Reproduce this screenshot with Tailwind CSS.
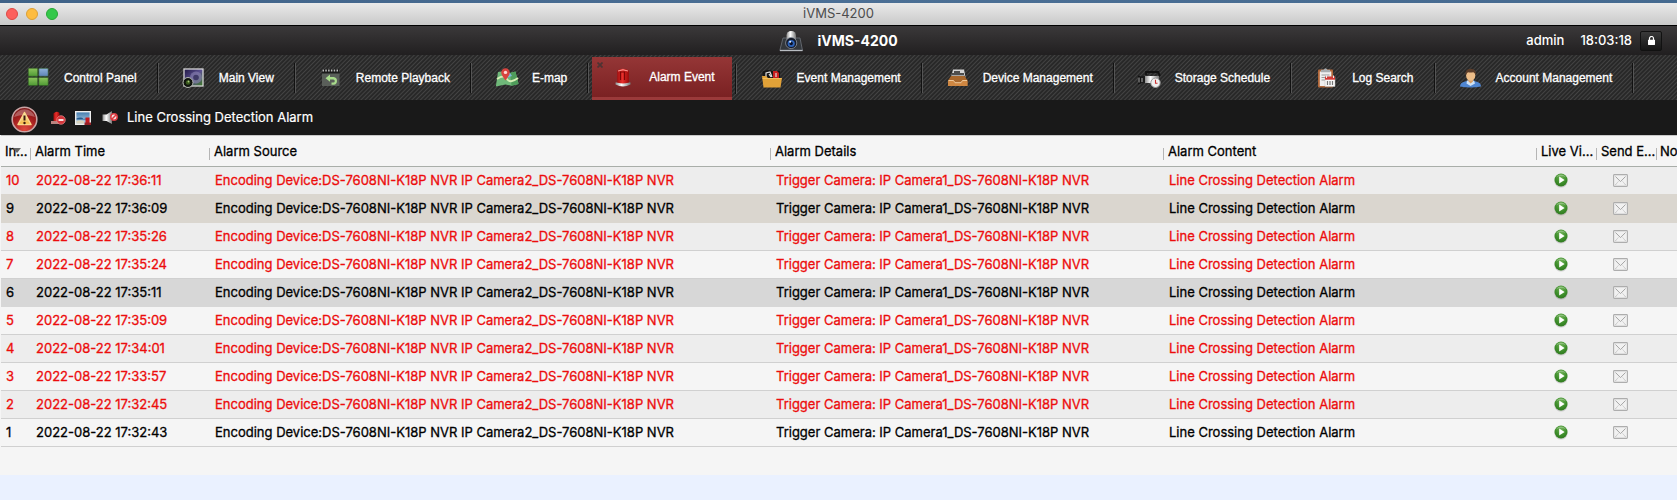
<!DOCTYPE html>
<html lang="en">
<head>
<meta charset="utf-8">
<title>iVMS-4200</title>
<script src="https://cdn.jsdelivr.net/npm/@tailwindcss/browser@4"></script>
</head>
<body class="min-h-screen bg-[#eaf1ff] font-['Inter',sans-serif] text-[13px] text-black overflow-x-hidden">

<svg class="absolute size-0" aria-hidden="true">
  <defs>
    <linearGradient id="gGreen" x1="0" y1="0" x2="0" y2="1"><stop offset="0" stop-color="#8cc45c"/><stop offset="1" stop-color="#4f9a35"/></linearGradient>
    <linearGradient id="gBlue" x1="0" y1="0" x2="0" y2="1"><stop offset="0" stop-color="#8fb2da"/><stop offset="1" stop-color="#5d83b5"/></linearGradient>
    <linearGradient id="gRed" x1="0" y1="0" x2="1" y2="0"><stop offset="0" stop-color="#a30f0f"/><stop offset=".45" stop-color="#e8302c"/><stop offset="1" stop-color="#9c0808"/></linearGradient>
    <linearGradient id="gSilver" x1="0" y1="0" x2="1" y2="0"><stop offset="0" stop-color="#8d8d8d"/><stop offset=".4" stop-color="#ffffff"/><stop offset="1" stop-color="#777"/></linearGradient>
    <linearGradient id="gView" x1="0" y1="0" x2="1" y2="1"><stop offset="0" stop-color="#1d1540"/><stop offset=".5" stop-color="#5b5090"/><stop offset="1" stop-color="#3c7a25"/></linearGradient>
    <linearGradient id="gSky" x1="0" y1="0" x2="0" y2="1"><stop offset="0" stop-color="#3f79ad"/><stop offset="1" stop-color="#c3dcee"/></linearGradient>
    <radialGradient id="gBadge" cx=".5" cy=".9" r=".9"><stop offset="0" stop-color="#e04a3e"/><stop offset=".6" stop-color="#a11d1d"/><stop offset="1" stop-color="#7a1a1a"/></radialGradient>
    <linearGradient id="gWarn" x1="0" y1="0" x2="0" y2="1"><stop offset="0" stop-color="#fff3c4"/><stop offset="1" stop-color="#f5b53c"/></linearGradient>
    <radialGradient id="gPlay" cx=".5" cy=".3" r=".7"><stop offset="0" stop-color="#6fb255"/><stop offset=".6" stop-color="#3f8f2c"/><stop offset="1" stop-color="#2f7a1f"/></radialGradient>
    <symbol id="play" viewBox="0 0 14 15"><ellipse cx="7" cy="8" rx="6.600" ry="6.600" fill="#000" opacity=".15"/><circle cx="7" cy="7" r="6.500" fill="url(#gPlay)"/><path d="M2 4.500A5.600 5.600 0 0 1 12 4.500Q7 1.600 2 4.500" fill="#fff" opacity=".3"/><path d="M5.200 3.400 10.600 7 5.200 10.600Z" fill="#fff"/></symbol>
    <symbol id="mail" viewBox="0 0 15 13"><rect x=".6" y=".6" width="13.800" height="11.800" rx=".8" fill="#f1f1f1" stroke="#adadad" stroke-width="1.100"/><path d="M2.500 2.500 7.500 7.600 12.500 2.500" fill="none" stroke="#a6a6a6"/><path d="M2.500 10.800 5.600 7.200M12.500 10.800 9.400 7.200" stroke="#b4b4b4" stroke-dasharray="1 .6"/></symbol>
  </defs>
</svg>

<div class="h-[3px] bg-linear-to-r from-[#3f6288] via-[#4b6f95] to-[#456a90]"></div>

<header>
  <div class="grid h-[23px] grid-cols-[1fr_auto_1fr] items-center border-b border-black bg-linear-to-b from-[#eaeaea] to-[#c9c9c9] px-1.5">
    <div class="flex gap-2">
      <button aria-label="Close" class="size-3 rounded-full border border-[#dd4a45] bg-[#fc605c]"></button>
      <button aria-label="Minimize" class="size-3 rounded-full border border-[#dda035] bg-[#fdbc40]"></button>
      <button aria-label="Zoom" class="size-3 rounded-full border border-[#28a836] bg-[#34c84a]"></button>
    </div>
    <div class="text-[#4c4c4c]">iVMS-4200</div>
  </div>

  <div class="grid h-[29px] grid-cols-[1fr_auto_1fr] items-center bg-linear-to-b from-[#3b393a] to-[#211f20] text-white">
    <div></div>
    <div class="flex items-center gap-3.5">
      <svg class="h-[22px] w-6" viewBox="0 0 24 22"><path d="M4 8h17l2.500 12.500H.8Z" fill="#33373c" stroke="#70757c" stroke-width=".8"/><path d="M1 20.500h22.500" stroke="#b9bdc2" stroke-width="1.300"/><rect x="7.500" y="1" width="9.500" height="13" rx="4.500" fill="url(#gSilver)"/><circle cx="12.200" cy="13" r="5.600" fill="#141a28" stroke="#8b929d" stroke-width=".8"/><circle cx="12.200" cy="13.500" r="3.600" fill="#2d62b8"/><circle cx="12.200" cy="13.500" r="1.700" fill="#081028"/><circle cx="11.200" cy="11.800" r="1" fill="#e4f0ff"/></svg>
      <h1 class="text-sm font-bold">iVMS-4200</h1>
    </div>
    <div class="flex items-center justify-end pr-[15px] font-medium">
      <span>admin</span>
      <span class="ml-4">18:03:18</span>
      <button aria-label="Lock" class="ml-2 flex h-5 w-[22px] items-center justify-center rounded-xs border border-[#111] bg-linear-to-b from-[#3a3a3a] to-[#161616]"><svg class="h-[9px] w-[7px]" viewBox="0 0 7 9"><rect y="3.700" width="7" height="5.300" rx=".4" fill="#fff"/><path d="M1.500 4V2.500a2 2 0 0 1 4 0V4" fill="none" stroke="#fff" stroke-width="1.200"/></svg></button>
    </div>
  </div>

  <nav class="flex h-[45px] items-center overflow-hidden bg-[#303030] bg-[repeating-linear-gradient(135deg,#282828_0px,#282828_1px,#434343_2px,#282828_3px)] font-['Liberation_Sans',Arial,sans-serif] text-xs text-white [-webkit-text-stroke:0.3px]">
    <button class="flex h-[30px] shrink-0 items-center gap-[11px] border-r border-[#555] pr-[21px] pl-[25px] shadow-[inset_-1px_0_#111]">
      <svg class="h-6 w-7" viewBox="0 0 28 24"><g stroke="#2f5b24" stroke-width=".6"><rect x="3.300" y="2.300" width="9.400" height="8" rx=".8" fill="url(#gGreen)"/><rect x="13.800" y="2.300" width="9.400" height="8" rx=".8" fill="url(#gBlue)"/><rect x="3.300" y="11.500" width="9.400" height="8" rx=".8" fill="url(#gGreen)"/><rect x="13.800" y="11.500" width="9.400" height="8" rx=".8" fill="url(#gGreen)"/></g></svg>
      Control Panel</button>
    <button class="flex h-[30px] shrink-0 items-center gap-[11px] border-r border-[#555] pr-[21px] pl-[21px] shadow-[inset_-1px_0_#111]">
      <svg class="h-6 w-7" viewBox="0 0 28 24"><rect x="4" y="3" width="19" height="17" fill="url(#gView)" stroke="#d6d6d6" stroke-width="1.300"/><circle cx="16" cy="11.500" r="6" fill="#8a83b0" opacity=".6"/><circle cx="16" cy="11.500" r="2.800" fill="#3f3a67"/><circle cx="8" cy="16.500" r="5" fill="#10140e" stroke="#b5b9b2"/><circle cx="8" cy="16.500" r="2.300" fill="#39591c"/><circle cx="8.500" cy="15.500" r=".9" fill="#a9c97c"/></svg>
      Main View</button>
    <button class="flex h-[30px] shrink-0 items-center gap-[11px] border-r border-[#555] pr-[21px] pl-[21px] shadow-[inset_-1px_0_#111]">
      <svg class="h-6 w-7" viewBox="0 0 28 24"><rect x="5" y="7" width="17.500" height="13" fill="#5a5f5a"/><rect x="5" y="3" width="17.500" height="4.500" fill="#1b1b1b"/><path d="M5.500 4.500h17" stroke="#bbb" stroke-width="2" stroke-dasharray="1.500 1.300"/><path d="M13 8.500 8.500 12.200 13 15.800V13.400h3.200a1.500 1.500 0 0 1 0 3.200h-1.700v2.200h2.200a3.900 3.900 0 0 0 0-7.700H13Z" fill="#a9dc8c"/></svg>
      Remote Playback</button>
    <button class="flex h-[30px] shrink-0 items-center gap-[11px] border-r border-[#555] pr-[21px] pl-[21px] shadow-[inset_-1px_0_#111]">
      <svg class="h-6 w-7" viewBox="0 0 28 24"><path d="M5 6 12 5l5 2 5.500-1.500L25.500 18l-7 1.800-6-1.300L2.800 20.500Z" fill="#6fb879"/><path d="m17 7 5.500-1.500L25.500 18l-7 1.800Z" fill="#4f9c5a"/><path d="M4 13q7-5 10 0t11-1" fill="none" stroke="#d7efb6" stroke-width="1.800"/><path d="M12 5l5 2 2 3-6 2Z" fill="#7cb8de"/><path d="M12.500 14.500Q8.200 9 8.200 6.600a4.300 4.300 0 0 1 8.600 0Q16.800 9 12.500 14.500Z" fill="#d8443f"/><circle cx="12.500" cy="6.400" r="1.700" fill="#ffd9d5"/></svg>
      E-map</button>
    <div class="flex h-full shrink-0 items-center pt-[2px] pl-[3px]">
      <button aria-current="page" class="relative flex h-full items-center gap-[11px] border-b-3 border-[#9a3a3a] bg-linear-to-b from-[#953636] to-[#7a2122] pr-[17px] pl-[18px]">
        <svg class="absolute top-[5px] left-[5px] size-[6px]" viewBox="0 0 6 6"><path d="m.5.5 5 5m0-5-5 5" stroke="#4c3333" stroke-width="1.700"/></svg>
        <svg class="h-6 w-7" viewBox="0 0 28 24"><path d="M5.500 17.500h15v2q-7.500 3.800-15 0Z" fill="url(#gSilver)"/><path d="M7.200 17.500V5.500Q13 2 18.800 5.500v12q-5.800 2-11.600 0Z" fill="url(#gRed)"/><path d="M10.500 15V7h4v8" fill="none" stroke="#7e0606" stroke-width="1.200"/><path d="M8 6q5-2.500 10 0" fill="none" stroke="#ff9b96"/></svg>
        Alarm Event</button>
      <i class="ml-[3px] h-[30px] w-[2px] border-r border-[#555] bg-[#111]"></i>
    </div>
    <button class="flex h-[30px] shrink-0 items-center gap-[11px] border-r border-[#555] pr-[21px] pl-[21px] shadow-[inset_-1px_0_#111]">
      <svg class="h-6 w-7" viewBox="0 0 28 24"><path d="M4.500 5.500 10 4l5 1h7v10H5Z" fill="#151515"/><path d="M15 5h4l2 2v5h-6Z" fill="#c91f1f"/><path d="M8 12V7l4-1 2 5M11 8l2 3M18 7v4" stroke="#ddd" stroke-width="1.200" fill="none"/><path d="M4 10h4l2 2h14l-1.500 9.500H5.500Z" fill="#e2a238"/><path d="M4.500 12.500h19" stroke="#f0bd5c"/></svg>
      Event Management</button>
    <button class="flex h-[30px] shrink-0 items-center gap-[11px] border-r border-[#555] pr-[21px] pl-[21px] shadow-[inset_-1px_0_#111]">
      <svg class="h-6 w-7" viewBox="0 0 28 24"><path d="M9 3.500h11l1.500 8H7Z" fill="#d5d5d5"/><path d="M10 6h6M8 8h12M8 10.500h13" stroke="#222" stroke-width="1.400"/><path d="M7 10 4 14.500V20h19.500v-5.500L20.500 10Z" fill="#a8672c"/><path d="M4 14.500h5.500l1.500 2.200h6l1.500-2.200h5V20H4Z" fill="#cf8742"/><path d="M4.500 14.500h5l1.500 2.200h6l1.500-2.200h4.500" stroke="#f4d0a4" stroke-width=".9" fill="none"/></svg>
      Device Management</button>
    <button class="flex h-[30px] shrink-0 items-center gap-[11px] border-r border-[#555] pr-[21px] pl-[21px] shadow-[inset_-1px_0_#111]">
      <svg class="h-6 w-7" viewBox="0 0 28 24"><path d="M2 9.500 6 11v6L2 18.500Z" fill="#111"/><rect x="5" y="10" width="8" height="7" fill="#1b1b1b"/><path d="M9 10h14v7H9Z" fill="url(#gSilver)"/><path d="M10 9V6h13M22 6l2 4" stroke="#111" stroke-width="1.800" fill="none"/><path d="M3 11.500v5M6 12v4" stroke="#aaa"/><circle cx="19.500" cy="16.800" r="4.700" fill="#eee" stroke="#9b9b9b"/><path d="M19.500 13.800v3.500h2" stroke="#c33" stroke-width="1.100" fill="none"/></svg>
      Storage Schedule</button>
    <button class="flex h-[30px] shrink-0 items-center gap-[11px] border-r border-[#555] pr-[21px] pl-[21px] shadow-[inset_-1px_0_#111]">
      <svg class="h-6 w-7" viewBox="0 0 28 24"><rect x="5" y="3.500" width="15" height="18" rx="1" fill="#b3683a"/><rect x="6.800" y="5.500" width="11.500" height="14.500" fill="#efefef"/><path d="M8 5.500V3.800h2.500Q12.500.8 14.500 3.800H17v2.500H8Z" fill="#a9adb0"/><path d="M8.500 9h8M8.500 11.500h5M8.500 14h4" stroke="#999"/><rect x="12" y="11" width="10" height="9.500" fill="#f8f8f8" stroke="#bbb" stroke-width=".5"/><path d="M12 10.500h10v3.200H12Z" fill="#d33a35"/><path d="M13.500 9.500v2.500M20.500 9.500v2.500" stroke="#eee"/><path d="M14.500 15v4M17 15v4M19.500 15v4" stroke="#777" stroke-width="1.200"/></svg>
      Log Search</button>
    <button class="flex h-[30px] shrink-0 items-center gap-[11px] border-r border-[#555] pr-[21px] pl-[21px] shadow-[inset_-1px_0_#111]">
      <svg class="h-6 w-7" viewBox="0 0 28 24"><path d="M3 20.500Q3 16.500 8 15.500l5.500-1.500 5.500 1.500q5 1 5 5Q13.500 22.500 3 20.500Z" fill="#4f86d2"/><path d="M10 14.500h7l1 3-4.500 2.500L9.500 17.500Z" fill="#cfe2f7"/><path d="M11.500 12h4.500v3.500l-2.300 2-2.200-2Z" fill="#d99f67"/><ellipse cx="13.700" cy="9.500" rx="4.600" ry="5.300" fill="#edbd88"/><path d="M8.700 9.500Q7.500 2.800 13.700 2.800t5 6.700q-1-3.200-2.500-3.300-3 .8-5.200 0-1.500.8-2.300 3.300Z" fill="#5b3d2a"/></svg>
      Account Management</button>
  </nav>

  <div class="flex h-[35px] items-center bg-[#191919] pl-[11px] text-white">
    <svg class="mt-1 size-[27px]" viewBox="0 0 27 27" aria-hidden="true"><circle cx="13.500" cy="13.500" r="12.300" fill="url(#gBadge)" stroke="#c9a5a5" stroke-width="1.600"/><path d="M3 11A11 11 0 0 1 24 11Q13.500 7 3 11Z" fill="#fff" opacity=".28"/><path d="M13.500 6.500 20 18.500H7Z" fill="url(#gWarn)" stroke="#fbd98b" stroke-width="1.500" stroke-linejoin="round"/><path d="M13.500 9.500v5" stroke="#3a1a10" stroke-width="2"/><circle cx="13.500" cy="17" r="1.200" fill="#3a1a10"/></svg>
    <button aria-label="Clear alarm" class="ml-3"><svg class="h-4 w-4" viewBox="0 0 16 16"><path d="M3.500 11V3.500Q6.500.5 9.500 3v8Z" fill="url(#gRed)"/><path d="M1 11h8.500v3H1Z" fill="#b9847f"/><circle cx="11" cy="10" r="4.300" fill="#d3343a" stroke="#e98c8c" stroke-width=".7"/><path d="M8.500 10h5" stroke="#fff" stroke-width="1.700"/></svg></button>
    <button aria-label="Picture pop-up" class="ml-[9px]"><svg class="h-4 w-4" viewBox="0 0 16 16"><rect x=".7" y="1.700" width="14.600" height="12.600" fill="url(#gSky)" stroke="#eee" stroke-width="1.400"/><path d="M1.500 8.500q5-2 7 .5l5.500-1v1.500H1.500Z" fill="#245c91"/><path d="M1.500 11q4-1.500 7.500 0V13.500H1.500Z" fill="#d8d2bb"/><path d="M10.500 7.500h4V13h-4Z" fill="#c31a20"/><path d="M9.500 12.500H16V15H9.500Z" fill="#942027"/></svg></button>
    <button aria-label="Mute" class="ml-[11px]"><svg class="h-4 w-4" viewBox="0 0 16 16"><path d="M.5 4.500h4L10 1v13L4.500 11H.5Z" fill="url(#gSilver)"/><circle cx="12" cy="7" r="3.200" fill="#f3e1e1" stroke="#dc3a40" stroke-width="1.500"/><path d="m9.800 9.200 4.400-4.400" stroke="#dc3a40" stroke-width="1.500"/></svg></button>
    <span class="ml-[9px] pt-px [-webkit-text-stroke:0.2px]">Line Crossing Detection Alarm</span>
  </div>
</header>

<main class="bg-[#f5f5f5] pb-7 pl-px">
  <table class="w-full table-fixed border-collapse text-left whitespace-nowrap [-webkit-text-stroke:0.3px]">
    <colgroup><col class="w-[29px]"><col class="w-[179px]"><col><col class="w-[393px]"><col class="w-[373px]"><col class="w-[60px]"><col class="w-[60px]"><col class="w-[21px]"></colgroup>
    <thead>
      <tr class="h-[31px] border-t border-b border-t-[#c9c9c9] border-b-[#a9aea9]">
        <th class="relative p-0 pt-px pl-1 font-normal">In...<svg class="absolute top-3 left-3 h-[5px] w-2" viewBox="0 0 8 5"><path d="M0 0h8L4 5Z" fill="#666"/></svg></th>
        <th class="p-0 pt-px font-normal"><div class="flex items-center gap-1"><i class="mt-1 h-3 w-px bg-[#b5b5b5]"></i>Alarm Time</div></th>
        <th class="p-0 pt-px font-normal"><div class="flex items-center gap-1"><i class="mt-1 h-3 w-px bg-[#b5b5b5]"></i>Alarm Source</div></th>
        <th class="p-0 pt-px font-normal"><div class="flex items-center gap-1"><i class="mt-1 h-3 w-px bg-[#b5b5b5]"></i>Alarm Details</div></th>
        <th class="p-0 pt-px font-normal"><div class="flex items-center gap-1"><i class="mt-1 h-3 w-px bg-[#b5b5b5]"></i>Alarm Content</div></th>
        <th class="p-0 pt-px font-normal"><div class="flex items-center gap-1"><i class="mt-1 h-3 w-px bg-[#b5b5b5]"></i>Live Vi...</div></th>
        <th class="p-0 pt-px font-normal"><div class="flex items-center gap-1"><i class="mt-1 h-3 w-px bg-[#b5b5b5]"></i>Send E...</div></th>
        <th class="p-0 pt-px font-normal"><div class="flex items-center gap-[3px]"><i class="mt-1 h-3 w-px shrink-0 bg-[#b5b5b5]"></i>No</div></th>
      </tr>
    </thead>
    <tbody id="rows"></tbody>
  </table>
</main>

<script>
  const red = 'text-[#ec0c0c]', black = 'text-black';
  const light = 'border-[#d0d0d0] bg-[#f5f5f5]', grey = 'border-[#d0d0d0] bg-[#ededed]';
  const alarms = [
    [10, '17:36:11', red, 'border-[#dad6cf] bg-[#ededed]'],
    [9, '17:36:09', black, 'border-[#dad6cf] bg-[#dad6cf]'],
    [8, '17:35:26', red, grey],
    [7, '17:35:24', red, light],
    [6, '17:35:11', black, 'border-[#d7d7d7] bg-[#d7d7d7]'],
    [5, '17:35:09', red, light],
    [4, '17:34:01', red, grey],
    [3, '17:33:57', red, light],
    [2, '17:32:45', red, grey],
    [1, '17:32:43', black, light],
  ];
  document.getElementById('rows').innerHTML = alarms.map(([n, time, colour, bg]) => `
    <tr class="h-7 border-b ${bg} ${colour}">
      <td class="p-0 pt-px pl-[5px]">${n}</td>
      <td class="p-0 pt-px pl-1.5">2022-08-22 ${time}</td>
      <td class="p-0 pt-px pl-1.5">Encoding Device:DS-7608NI-K18P NVR IP Camera2_DS-7608NI-K18P NVR</td>
      <td class="p-0 pt-px pl-1.5">Trigger Camera: IP Camera1_DS-7608NI-K18P NVR</td>
      <td class="p-0 pt-px pl-1.5">Line Crossing Detection Alarm</td>
      <td class="p-0 pl-[18px]"><button aria-label="Live view" class="block"><svg class="h-[15px] w-3.5"><use href="#play"/></svg></button></td>
      <td class="p-0 pl-[17px]"><button aria-label="Send email" class="block"><svg class="h-[13px] w-[15px]"><use href="#mail"/></svg></button></td>
      <td class="p-0"></td>
    </tr>`).join('');
</script>
</body>
</html>
